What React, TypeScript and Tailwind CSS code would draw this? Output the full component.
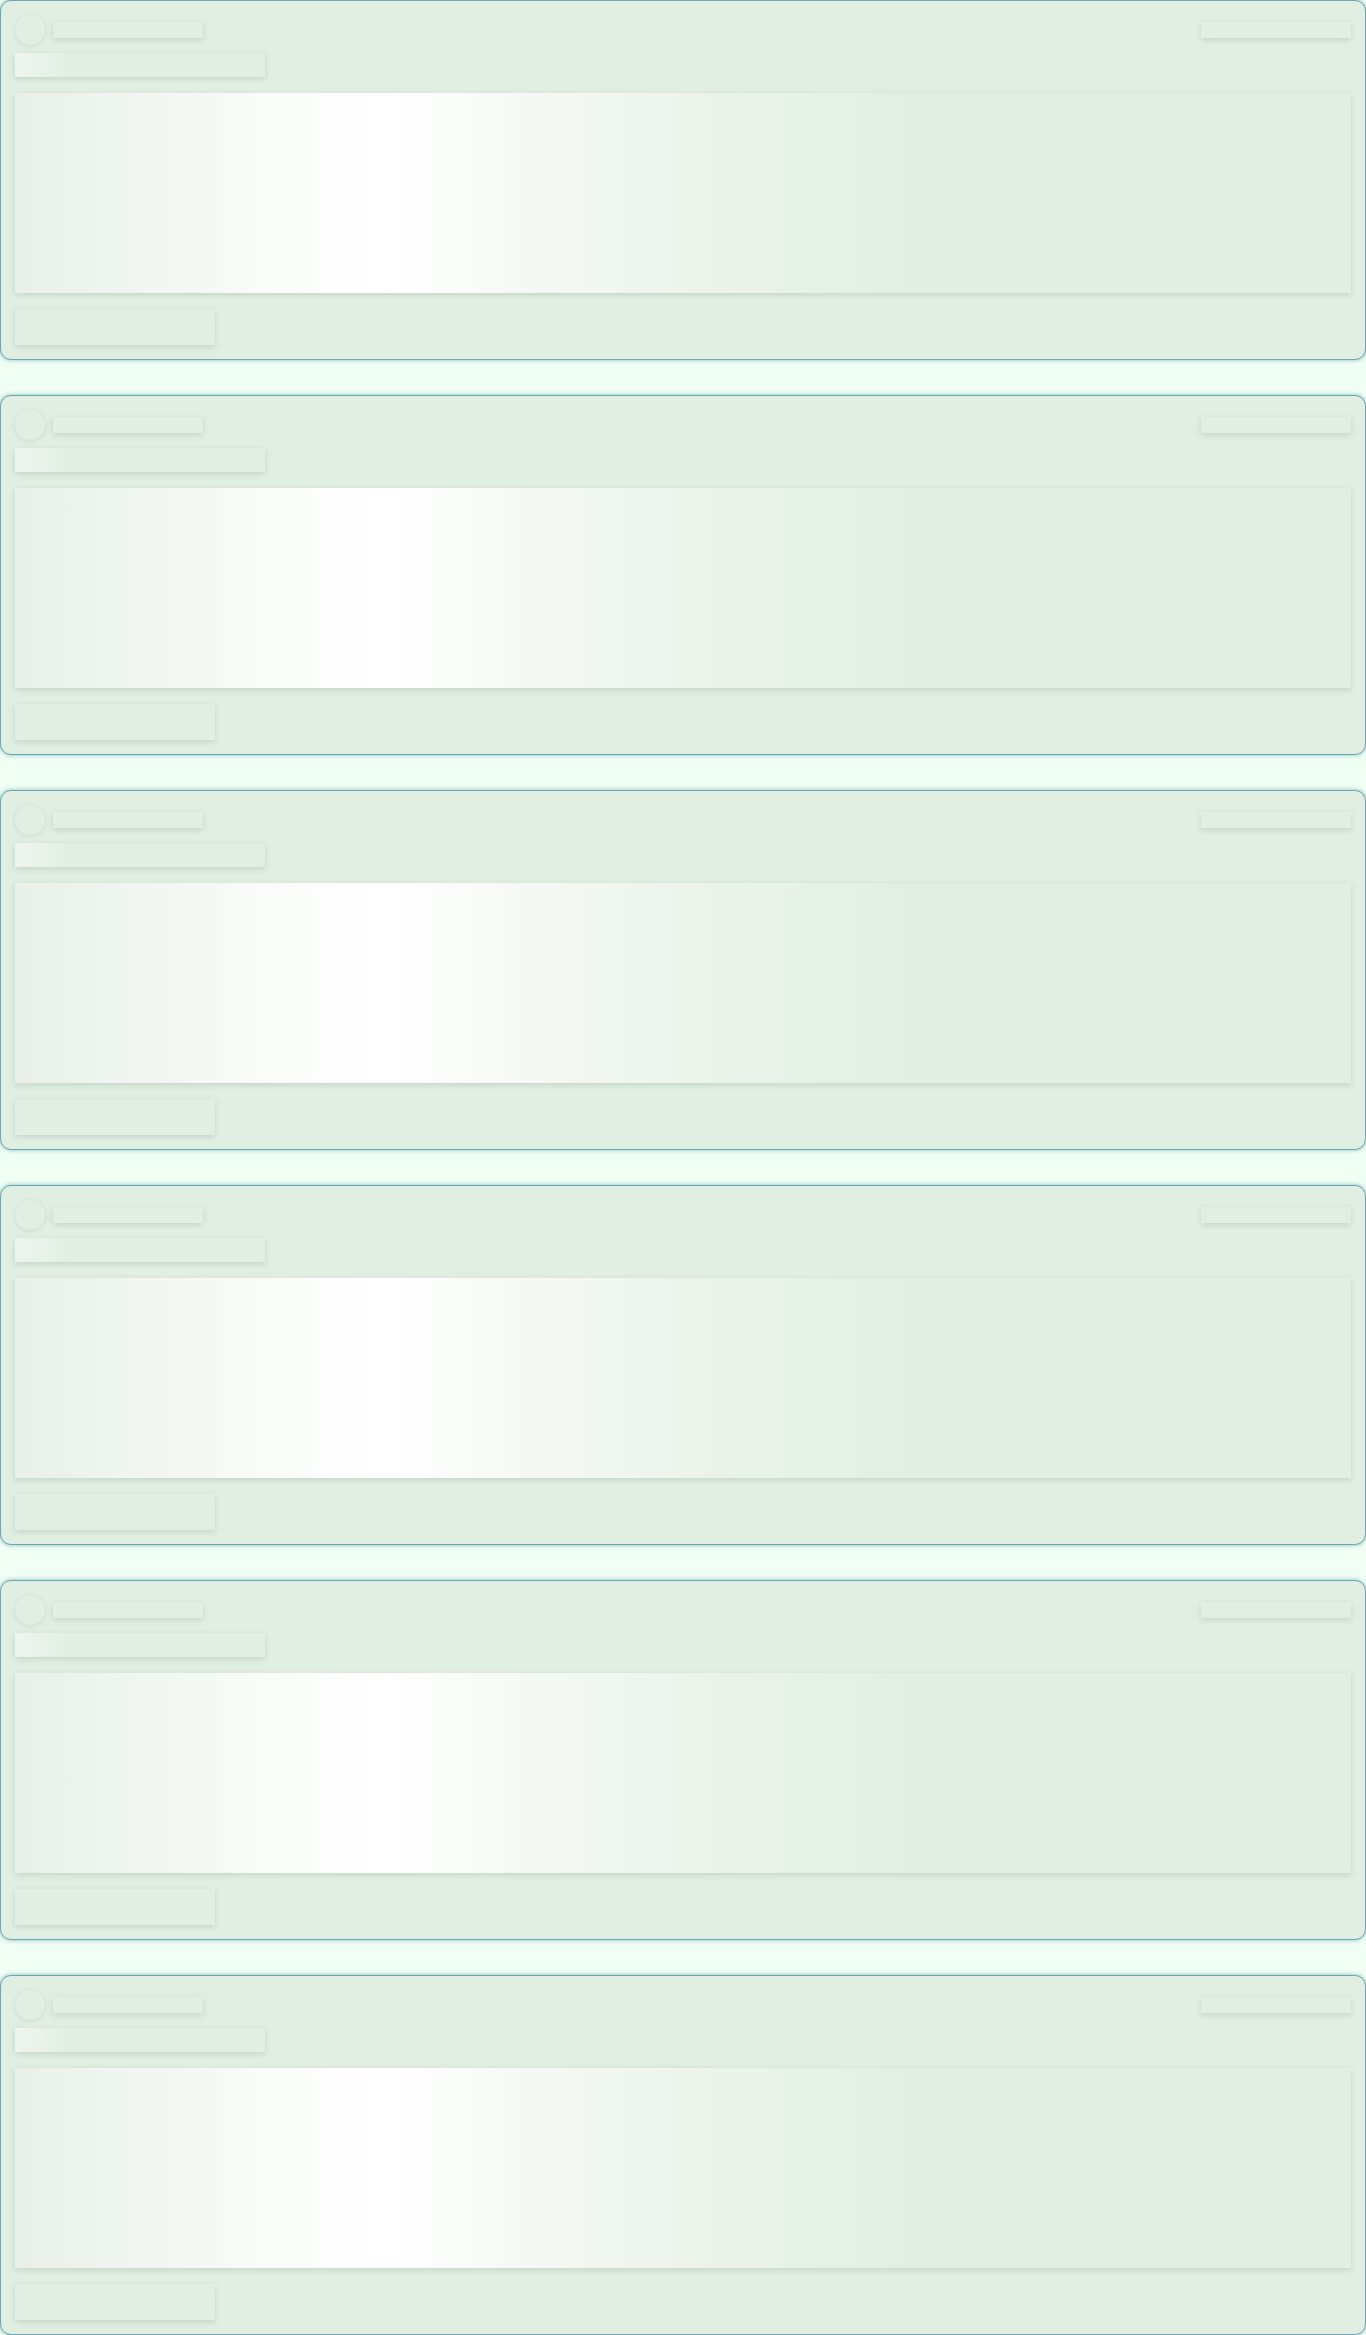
import React from "react";

const shadow = "shadow-[0_2px_6px_rgba(60,90,70,0.18)]";

function Card() {
  return (
    <div className="rounded-[11px] border border-[#6ea6b4] bg-[#e1efe2] p-[14px] shadow-[0_0_4px_rgba(60,140,160,0.6)]">
      <div className="flex h-[30px] items-center justify-between">
        <div className="flex items-center gap-[8px]">
          <div className="h-[30px] w-[30px] rounded-full bg-[#e1efe2] shadow-[0_1px_5px_rgba(60,90,70,0.14)]" />
          <div className={`h-[16px] w-[150px] bg-[#e1efe2] ${shadow}`} />
        </div>
        <div className={`h-[16px] w-[150px] bg-[#e1efe2] ${shadow}`} />
      </div>
      <div
        className={`mt-[8px] h-[24px] w-[250px] bg-[linear-gradient(90deg,#eef5ef_0%,#e1efe2_22%,#e1efe2_100%)] ${shadow}`}
      />
      <div
        className={`mt-[16px] h-[200px] w-full bg-[linear-gradient(90deg,#e8f0e9_0%,#fbfdfb_21%,#ffffff_28%,#f7faf7_36%,#ecf4ec_50%,#e1efe2_67%,#e1efe2_100%)] ${shadow}`}
      />
      <div className={`mt-[16px] h-[36px] w-[200px] bg-[#e1efe2] ${shadow}`} />
    </div>
  );
}

export default function App() {
  return (
    <div className="flex min-h-[2335px] w-full flex-col gap-[35px] bg-[#f0fff4]">
      {Array.from({ length: 6 }).map((_, i) => (
        <Card key={i} />
      ))}
    </div>
  );
}
